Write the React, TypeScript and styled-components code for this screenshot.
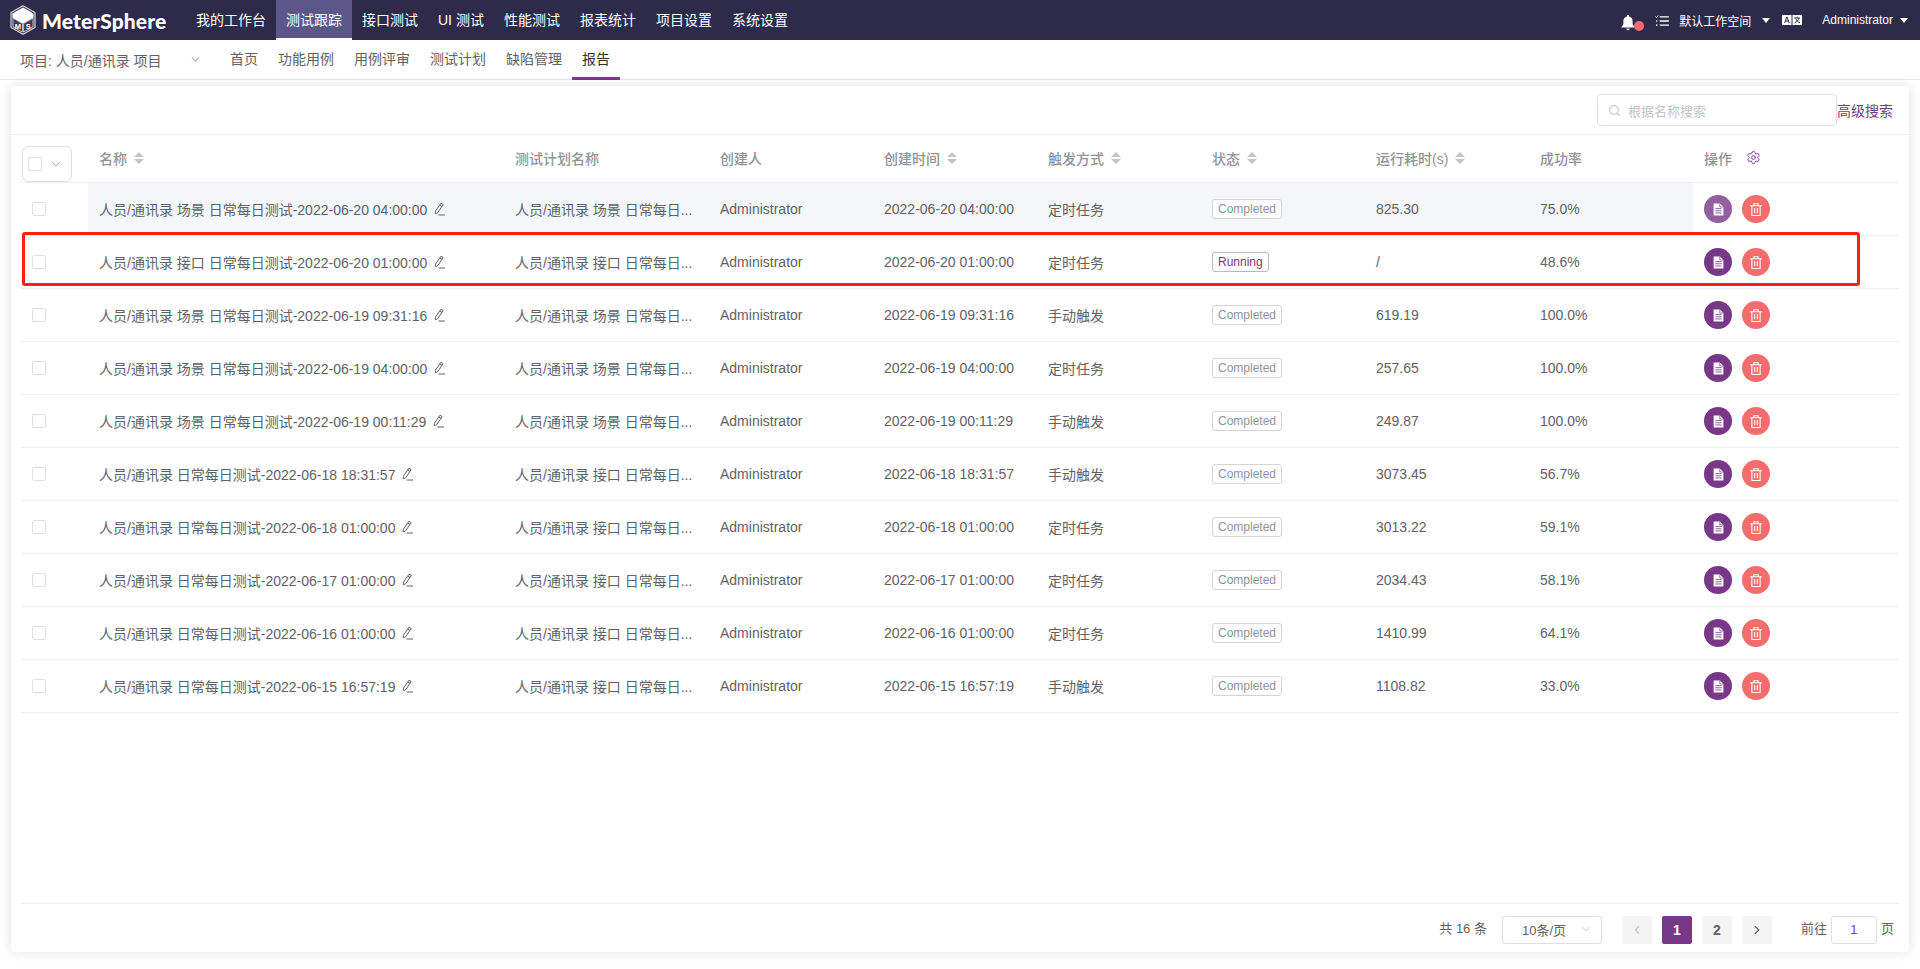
import React from "react";
import styled, { createGlobalStyle } from "styled-components";
import { Settings, Search, ChevronDown, ChevronLeft, ChevronRight } from "lucide-react";

const FONT = `"Liberation Sans", "Noto Sans CJK SC", sans-serif`;
const PRIMARY = "#783887";

const Global = createGlobalStyle`
  html, body { margin: 0; padding: 0; background: #fff; height: 100%; overflow: hidden; }
  body { font-family: ${FONT}; }
  * { box-sizing: border-box; }
`;

const Page = styled.div`
  width: 1920px;
  height: 969px;
  display: flex;
  flex-direction: column;
`;

const TopBar = styled.header`
  height: 40px;
  background: #2d2a4a;
  display: flex;
  align-items: stretch;
  color: #fff;
  flex: none;
`;
const Brand = styled.div`
  width: 186px;
  flex: none;
  display: flex;
  align-items: center;
  padding-left: 10px;
  gap: 6px;
`;
const BrandName = styled.span`
  font-family: "Lato", sans-serif;
  font-weight: 900;
  font-size: 21px;
  letter-spacing: 0.1px;
  color: #fff;
`;
const NavItem = styled.div<{ $active?: boolean }>`
  padding: 0 10px;
  font-size: 14px;
  line-height: 40px;
  color: #fff;
  background: ${(p) => (p.$active ? "#5c5689" : "transparent")};
  border-bottom: ${(p) => (p.$active ? "2px solid #fff" : "none")};
  height: 40px;
  white-space: nowrap;
`;
const TopRight = styled.div`
  margin-left: auto;
  display: flex;
  align-items: center;
  font-size: 12px;
  padding-right: 12px;
`;
const BellWrap = styled.div`
  position: relative;
  width: 24px;
  height: 17px;
  margin: 4px 9px 0 0;
  display: flex;
`;
const RedDot = styled.span`
  position: absolute;
  left: 13px;
  top: 7px;
  width: 10px;
  height: 10px;
  border-radius: 50%;
  background: #f56c6c;
`;
const Caret = styled.span<{ $gap: number }>`
  width: 0;
  height: 0;
  border-left: 4px solid transparent;
  border-right: 4px solid transparent;
  border-top: 5px solid #fff;
  margin-left: ${(p) => p.$gap}px;
`;
const TopLabel = styled.span<{ $left: number }>`
  margin-left: ${(p) => p.$left}px;
  white-space: nowrap;
  display: flex;
  align-items: center;
`;
const TaskSlot = styled.span`
  display: flex;
  margin-left: 1px;
  margin-top: 1px;
`;

const SubBar = styled.nav`
  height: 40px;
  flex: none;
  display: flex;
  align-items: stretch;
  border-bottom: 1px solid #e6e6e6;
  padding-left: 20px;
  font-size: 14px;
  color: #606266;
`;
const ProjectSelect = styled.div`
  width: 200px;
  display: flex;
  align-items: center;
  color: #606266;
  font-size: 14px;
  svg { margin-left: 27px; color: #a8abb2; }
`;
const SubItem = styled.div<{ $active?: boolean }>`
  padding: 0 10px;
  line-height: 38px;
  height: 40px;
  color: ${(p) => (p.$active ? "#303133" : "#606266")};
  border-bottom: ${(p) => (p.$active ? `3px solid ${PRIMARY}` : "none")};
`;
const SubItems = styled.div`
  display: flex;
`;

const Main = styled.main`
  flex: 1;
  padding: 6px 11px 17px 11px;
  display: flex;
`;
const Card = styled.section`
  flex: 1;
  background: #fff;
  border-radius: 4px;
  box-shadow: 0 0 12px rgba(0, 0, 0, 0.12);
  padding: 0 10px;
  display: flex;
  flex-direction: column;
`;
const Toolbar = styled.div`
  height: 49px;
  flex: none;
  margin: 0 -10px;
  padding: 8px 16px 0 0;
  border-bottom: 1px solid #ebeef5;
  display: flex;
  justify-content: flex-end;
  align-items: flex-start;
`;
const SearchBox = styled.div`
  width: 240px;
  height: 32px;
  border: 1px solid #dcdfe6;
  border-radius: 4px;
  display: flex;
  align-items: center;
  padding-left: 10px;
  gap: 7px;
  font-size: 13px;
  color: #c0c4cc;
  svg { color: #c0c4cc; }
`;
const AdvLink = styled.a`
  font-size: 14px;
  color: ${PRIMARY};
  line-height: 34px;
  white-space: nowrap;
`;

const COLS = "67px 416px 205px 164px 164px 164px 164px 164px 164px 206px";

const HeadRow = styled.div`
  display: grid;
  grid-template-columns: ${COLS};
  height: 48px;
  border-bottom: 1px solid #ebeef5;
  align-items: center;
  flex: none;
`;
const HeadCell = styled.div`
  padding: 0 0 2px 11px;
  font-size: 14px;
  font-weight: 500;
  color: #909399;
  display: flex;
  align-items: center;
  gap: 7px;
  white-space: nowrap;
`;
const SelectAll = styled.div`
  width: 50px;
  height: 36px;
  margin: 11px 0 0 1px;
  border: 1px solid #dcdfe6;
  border-radius: 6px;
  background: #fff;
  display: flex;
  align-items: center;
  padding-left: 5px;
  gap: 7px;
  svg { color: #909399; }
`;
const Check = styled.span`
  width: 14px;
  height: 14px;
  border: 1px solid #dcdfe6;
  border-radius: 2px;
  background: #fff;
  display: block;
  flex: none;
`;
const Row = styled.div`
  position: relative;
  display: grid;
  grid-template-columns: ${COLS};
  height: 53px;
  border-bottom: 1px solid #ebeef5;
  align-items: stretch;
  flex: none;
`;
const CheckCell = styled.div`
  display: flex;
  align-items: center;
  padding-left: 11px;
`;
const Cell = styled.div<{ $hover?: boolean }>`
  padding: 0 10px 0 11px;
  font-size: 14px;
  color: #606266;
  display: flex;
  align-items: center;
  min-width: 0;
  white-space: nowrap;
  background: ${(p) => (p.$hover ? "#f5f6fa" : "transparent")};
`;
const EditIcon = styled.svg`
  margin-left: 6px;
  flex: none;
`;
const Tag = styled.span<{ $running?: boolean }>`
  height: 20px;
  line-height: 18px;
  padding: 0 5px;
  font-size: 12px;
  border-radius: 3px;
  border: 1px solid ${(p) => (p.$running ? "#c9afcf" : "#d3d4d6")};
  color: ${(p) => (p.$running ? PRIMARY : "#909399")};
  background: #fff;
  white-space: nowrap;
`;
const OpCell = styled.div`
  padding-left: 11px;
  display: flex;
  align-items: center;
  gap: 10px;
`;
const RoundBtn = styled.button<{ $bg: string }>`
  width: 28px;
  height: 28px;
  padding: 0;
  border: none;
  border-radius: 50%;
  background: ${(p) => p.$bg};
  display: flex;
  align-items: center;
  justify-content: center;
`;
const RedBox = styled.div`
  position: absolute;
  left: 1px;
  top: -4px;
  width: 1838px;
  height: 54px;
  border: 3px solid #ff1f14;
  border-radius: 3px;
  pointer-events: none;
`;
const GearIcon = styled(Settings)`
  margin-left: 7px;
  color: ${PRIMARY};
`;

const Footer = styled.footer`
  margin-top: auto;
  height: 49px;
  flex: none;
  border-top: 1px solid #ebeef5;
  display: flex;
  align-items: flex-start;
  justify-content: flex-end;
  padding: 12px 5px 0 0;
  font-size: 13px;
  color: #606266;
`;
const Total = styled.span`
  line-height: 26px;
  margin-right: 15px;
  white-space: nowrap;
`;
const PageSize = styled.div`
  width: 100px;
  height: 28px;
  border: 1px solid #dcdfe6;
  border-radius: 3px;
  display: flex;
  align-items: center;
  padding: 0 0 2px 19px;
  margin-right: 20px;
  svg { margin-left: auto; margin-right: 8px; color: #c0c4cc; }
`;
const Pager = styled.button<{ $active?: boolean; $muted?: boolean }>`
  width: 30px;
  height: 28px;
  margin-right: 10px;
  padding: 0;
  border: none;
  border-radius: 2px;
  background: ${(p) => (p.$active ? PRIMARY : "#f4f4f5")};
  color: ${(p) => (p.$active ? "#fff" : p.$muted ? "#c0c4cc" : "#606266")};
  font-family: ${FONT};
  font-weight: 700;
  font-size: 14px;
  display: flex;
  align-items: center;
  justify-content: center;
`;
const Goto = styled.span`
  line-height: 26px;
  margin-left: 19px;
  white-space: nowrap;
`;
const GotoInput = styled.div`
  width: 46px;
  height: 28px;
  margin: 0 4px;
  border: 1px solid #dcdfe6;
  border-radius: 3px;
  text-align: center;
  line-height: 26px;
`;
const GotoEnd = styled.span`
  line-height: 26px;
`;

const SortIcon = () => (
  <svg width="10" height="12" viewBox="0 0 10 12">
    <path d="M5 0 10 5H0z M5 12 0 7h10z" fill="#c0c4cc" />
  </svg>
);

const PencilIcon = () => (
  <EditIcon width="12" height="14" viewBox="0 0 12 14" fill="none" stroke="#606266" strokeWidth="1">
    <path d="M8 1.2 10.2 2.6 4.6 10.8 2.2 11.8 2.4 9.2z" />
    <path d="M6.8 3 9 4.4" />
    <path d="M5.5 13H12" />
  </EditIcon>
);

const DocIcon = () => (
  <svg width="11" height="13" viewBox="0 0 10 12">
    <path d="M.5 .5h5.8L9.5 3.6v7.9H.5z" fill="#fff" />
    <path d="M2.2 5.2h5.6M2.2 7.2h5.6M2.2 9.2h5.6" stroke="#7b4a8a" strokeWidth=".8" fill="none" />
    <path d="M6.2 .8V3.7h3" stroke="#7b4a8a" strokeWidth=".7" fill="none" />
  </svg>
);

const TrashIcon = () => (
  <svg width="12" height="13" viewBox="0 0 11 12" fill="none" stroke="#fff" strokeWidth="1">
    <path d="M0 2.5h11M3.5 2.5V.7h4v1.8M1.7 2.5v9h7.6v-9M4.3 4.6v4.8M6.7 4.6v4.8" />
  </svg>
);

const Logo = () => (
  <svg width="26" height="30" viewBox="0 0 26 30">
    <path d="M13 .8 25 7.6v14.8L13 29.2 1 22.4V7.6z" fill="#3b385a" stroke="#d3d2de" strokeWidth="1.2" />
    <path d="M13 2.6 23.6 8.4v4L13 18.4 2.4 12.4v-4z" fill="#fff" />
    <path d="M3 13.2 12.4 18.6V27L3 21.8z M23 13.2 13.6 18.6V27L23 21.8z" fill="#3b385a" stroke="#fff" strokeWidth=".7" />
    <text x="7.8" y="23.6" fontSize="7.5" fontWeight="700" fill="#fff" fontFamily="Liberation Sans" textAnchor="middle">M</text>
    <text x="18.2" y="23.6" fontSize="7.5" fontWeight="700" fill="#fff" fontFamily="Liberation Sans" textAnchor="middle">S</text>
  </svg>
);

const BellIcon = () => (
  <svg width="14" height="17" viewBox="0 0 13 15">
    <path d="M6.5 .5c.6 0 1 .4 1 1v.4c2.2.5 3.3 2.2 3.3 4.4v3l1.7 2.2v.7H.5v-.7l1.7-2.2v-3c0-2.2 1.1-3.9 3.3-4.4v-.4c0-.6.4-1 1-1z M5 13h3c0 1-.6 1.6-1.5 1.6S5 14 5 13z" fill="#fff" />
  </svg>
);

const TaskIcon = () => (
  <svg width="14" height="12" viewBox="0 0 15 13" fill="none" stroke="#fff">
    <path d="M5 2h10M5 6.5h10M5 11h10" strokeWidth="1.4" />
    <path d="M.5 1.5 1.6 2.7 3.4.6" strokeWidth="1" />
    <circle cx="1.8" cy="6.5" r=".9" fill="#fff" stroke="none" />
    <circle cx="1.8" cy="11" r=".9" fill="#fff" stroke="none" />
  </svg>
);

const TranslateIcon = () => (
  <svg width="20" height="10" viewBox="0 0 20 10">
    <rect x="0" y="0" width="9.5" height="10" fill="#fff" />
    <rect x="10.5" y="0" width="9.5" height="10" fill="#fff" />
    <path d="M2.6 8 4.7 2h.4l2.1 6M3.4 6h3" stroke="#2d2a4a" strokeWidth="1" fill="none" />
    <path d="M12.2 3h6M15.2 1.6V3M17 3c-.6 2.4-2.4 4-4.4 4.8M13.6 3.6c.7 2 2.2 3.4 4.4 4.2" stroke="#2d2a4a" strokeWidth=".9" fill="none" />
  </svg>
);

const NAV = ["我的工作台", "测试跟踪", "接口测试", "UI 测试", "性能测试", "报表统计", "项目设置", "系统设置"];
const SUB = ["首页", "功能用例", "用例评审", "测试计划", "缺陷管理", "报告"];

type Report = {
  name: string;
  plan: string;
  time: string;
  trigger: string;
  status: string;
  cost: string;
  rate: string;
};

const SCENE = "人员/通讯录 场景 日常每日...";
const API = "人员/通讯录 接口 日常每日...";

const REPORTS: Report[] = [
  { name: "人员/通讯录 场景 日常每日测试-2022-06-20 04:00:00", plan: SCENE, time: "2022-06-20 04:00:00", trigger: "定时任务", status: "Completed", cost: "825.30", rate: "75.0%" },
  { name: "人员/通讯录 接口 日常每日测试-2022-06-20 01:00:00", plan: API, time: "2022-06-20 01:00:00", trigger: "定时任务", status: "Running", cost: "/", rate: "48.6%" },
  { name: "人员/通讯录 场景 日常每日测试-2022-06-19 09:31:16", plan: SCENE, time: "2022-06-19 09:31:16", trigger: "手动触发", status: "Completed", cost: "619.19", rate: "100.0%" },
  { name: "人员/通讯录 场景 日常每日测试-2022-06-19 04:00:00", plan: SCENE, time: "2022-06-19 04:00:00", trigger: "定时任务", status: "Completed", cost: "257.65", rate: "100.0%" },
  { name: "人员/通讯录 场景 日常每日测试-2022-06-19 00:11:29", plan: SCENE, time: "2022-06-19 00:11:29", trigger: "手动触发", status: "Completed", cost: "249.87", rate: "100.0%" },
  { name: "人员/通讯录 日常每日测试-2022-06-18 18:31:57", plan: API, time: "2022-06-18 18:31:57", trigger: "手动触发", status: "Completed", cost: "3073.45", rate: "56.7%" },
  { name: "人员/通讯录 日常每日测试-2022-06-18 01:00:00", plan: API, time: "2022-06-18 01:00:00", trigger: "定时任务", status: "Completed", cost: "3013.22", rate: "59.1%" },
  { name: "人员/通讯录 日常每日测试-2022-06-17 01:00:00", plan: API, time: "2022-06-17 01:00:00", trigger: "定时任务", status: "Completed", cost: "2034.43", rate: "58.1%" },
  { name: "人员/通讯录 日常每日测试-2022-06-16 01:00:00", plan: API, time: "2022-06-16 01:00:00", trigger: "定时任务", status: "Completed", cost: "1410.99", rate: "64.1%" },
  { name: "人员/通讯录 日常每日测试-2022-06-15 16:57:19", plan: API, time: "2022-06-15 16:57:19", trigger: "手动触发", status: "Completed", cost: "1108.82", rate: "33.0%" },
];

const HEADERS: { label: string; sort?: boolean }[] = [
  { label: "名称", sort: true },
  { label: "测试计划名称" },
  { label: "创建人" },
  { label: "创建时间", sort: true },
  { label: "触发方式", sort: true },
  { label: "状态", sort: true },
  { label: "运行耗时(s)", sort: true },
  { label: "成功率" },
];

export default function App() {
  return (
    <Page>
      <Global />
      <TopBar>
        <Brand>
          <Logo />
          <BrandName>MeterSphere</BrandName>
        </Brand>
        {NAV.map((n, i) => (
          <NavItem key={n} $active={i === 1}>{n}</NavItem>
        ))}
        <TopRight>
          <BellWrap>
            <BellIcon />
            <RedDot />
          </BellWrap>
          <TaskSlot><TaskIcon /></TaskSlot>
          <TopLabel $left={10}>默认工作空间</TopLabel>
          <Caret $gap={11} />
          <TopLabel $left={12}><TranslateIcon /></TopLabel>
          <TopLabel $left={20}>Administrator</TopLabel>
          <Caret $gap={7} />
        </TopRight>
      </TopBar>
      <SubBar>
        <ProjectSelect>
          项目: 人员/通讯录 项目
          <ChevronDown size={13} />
        </ProjectSelect>
        <SubItems>
          {SUB.map((s, i) => (
            <SubItem key={s} $active={i === SUB.length - 1}>{s}</SubItem>
          ))}
        </SubItems>
      </SubBar>
      <Main>
        <Card>
          <Toolbar>
            <SearchBox>
              <Search size={13} />
              根据名称搜索
            </SearchBox>
            <AdvLink>高级搜索</AdvLink>
          </Toolbar>
          <HeadRow>
            <SelectAll>
              <Check />
              <ChevronDown size={14} strokeWidth={1.5} />
            </SelectAll>
            {HEADERS.map((h) => (
              <HeadCell key={h.label}>
                {h.label}
                {h.sort && <SortIcon />}
              </HeadCell>
            ))}
            <HeadCell>
              操作
              <GearIcon size={15} strokeWidth={1.5} />
            </HeadCell>
          </HeadRow>
          {REPORTS.map((r, i) => {
            const hover = i === 0;
            return (
              <Row key={r.name}>
                <CheckCell><Check /></CheckCell>
                <Cell $hover={hover}>
                  {r.name}
                  <PencilIcon />
                </Cell>
                <Cell $hover={hover}>{r.plan}</Cell>
                <Cell $hover={hover}>Administrator</Cell>
                <Cell $hover={hover}>{r.time}</Cell>
                <Cell $hover={hover}>{r.trigger}</Cell>
                <Cell $hover={hover}>
                  <Tag $running={r.status === "Running"}>{r.status}</Tag>
                </Cell>
                <Cell $hover={hover}>{r.cost}</Cell>
                <Cell $hover={hover}>{r.rate}</Cell>
                <OpCell>
                  <RoundBtn $bg={hover ? "#93609f" : PRIMARY}><DocIcon /></RoundBtn>
                  <RoundBtn $bg="#f56c6c"><TrashIcon /></RoundBtn>
                </OpCell>
                {i === 1 && <RedBox />}
              </Row>
            );
          })}
          <Footer>
            <Total>共 16 条</Total>
            <PageSize>
              10条/页
              <ChevronDown size={14} strokeWidth={1.5} />
            </PageSize>
            <Pager $muted><ChevronLeft size={14} /></Pager>
            <Pager $active>1</Pager>
            <Pager>2</Pager>
            <Pager><ChevronRight size={14} /></Pager>
            <Goto>前往</Goto>
            <GotoInput>1</GotoInput>
            <GotoEnd>页</GotoEnd>
          </Footer>
        </Card>
      </Main>
    </Page>
  );
}
